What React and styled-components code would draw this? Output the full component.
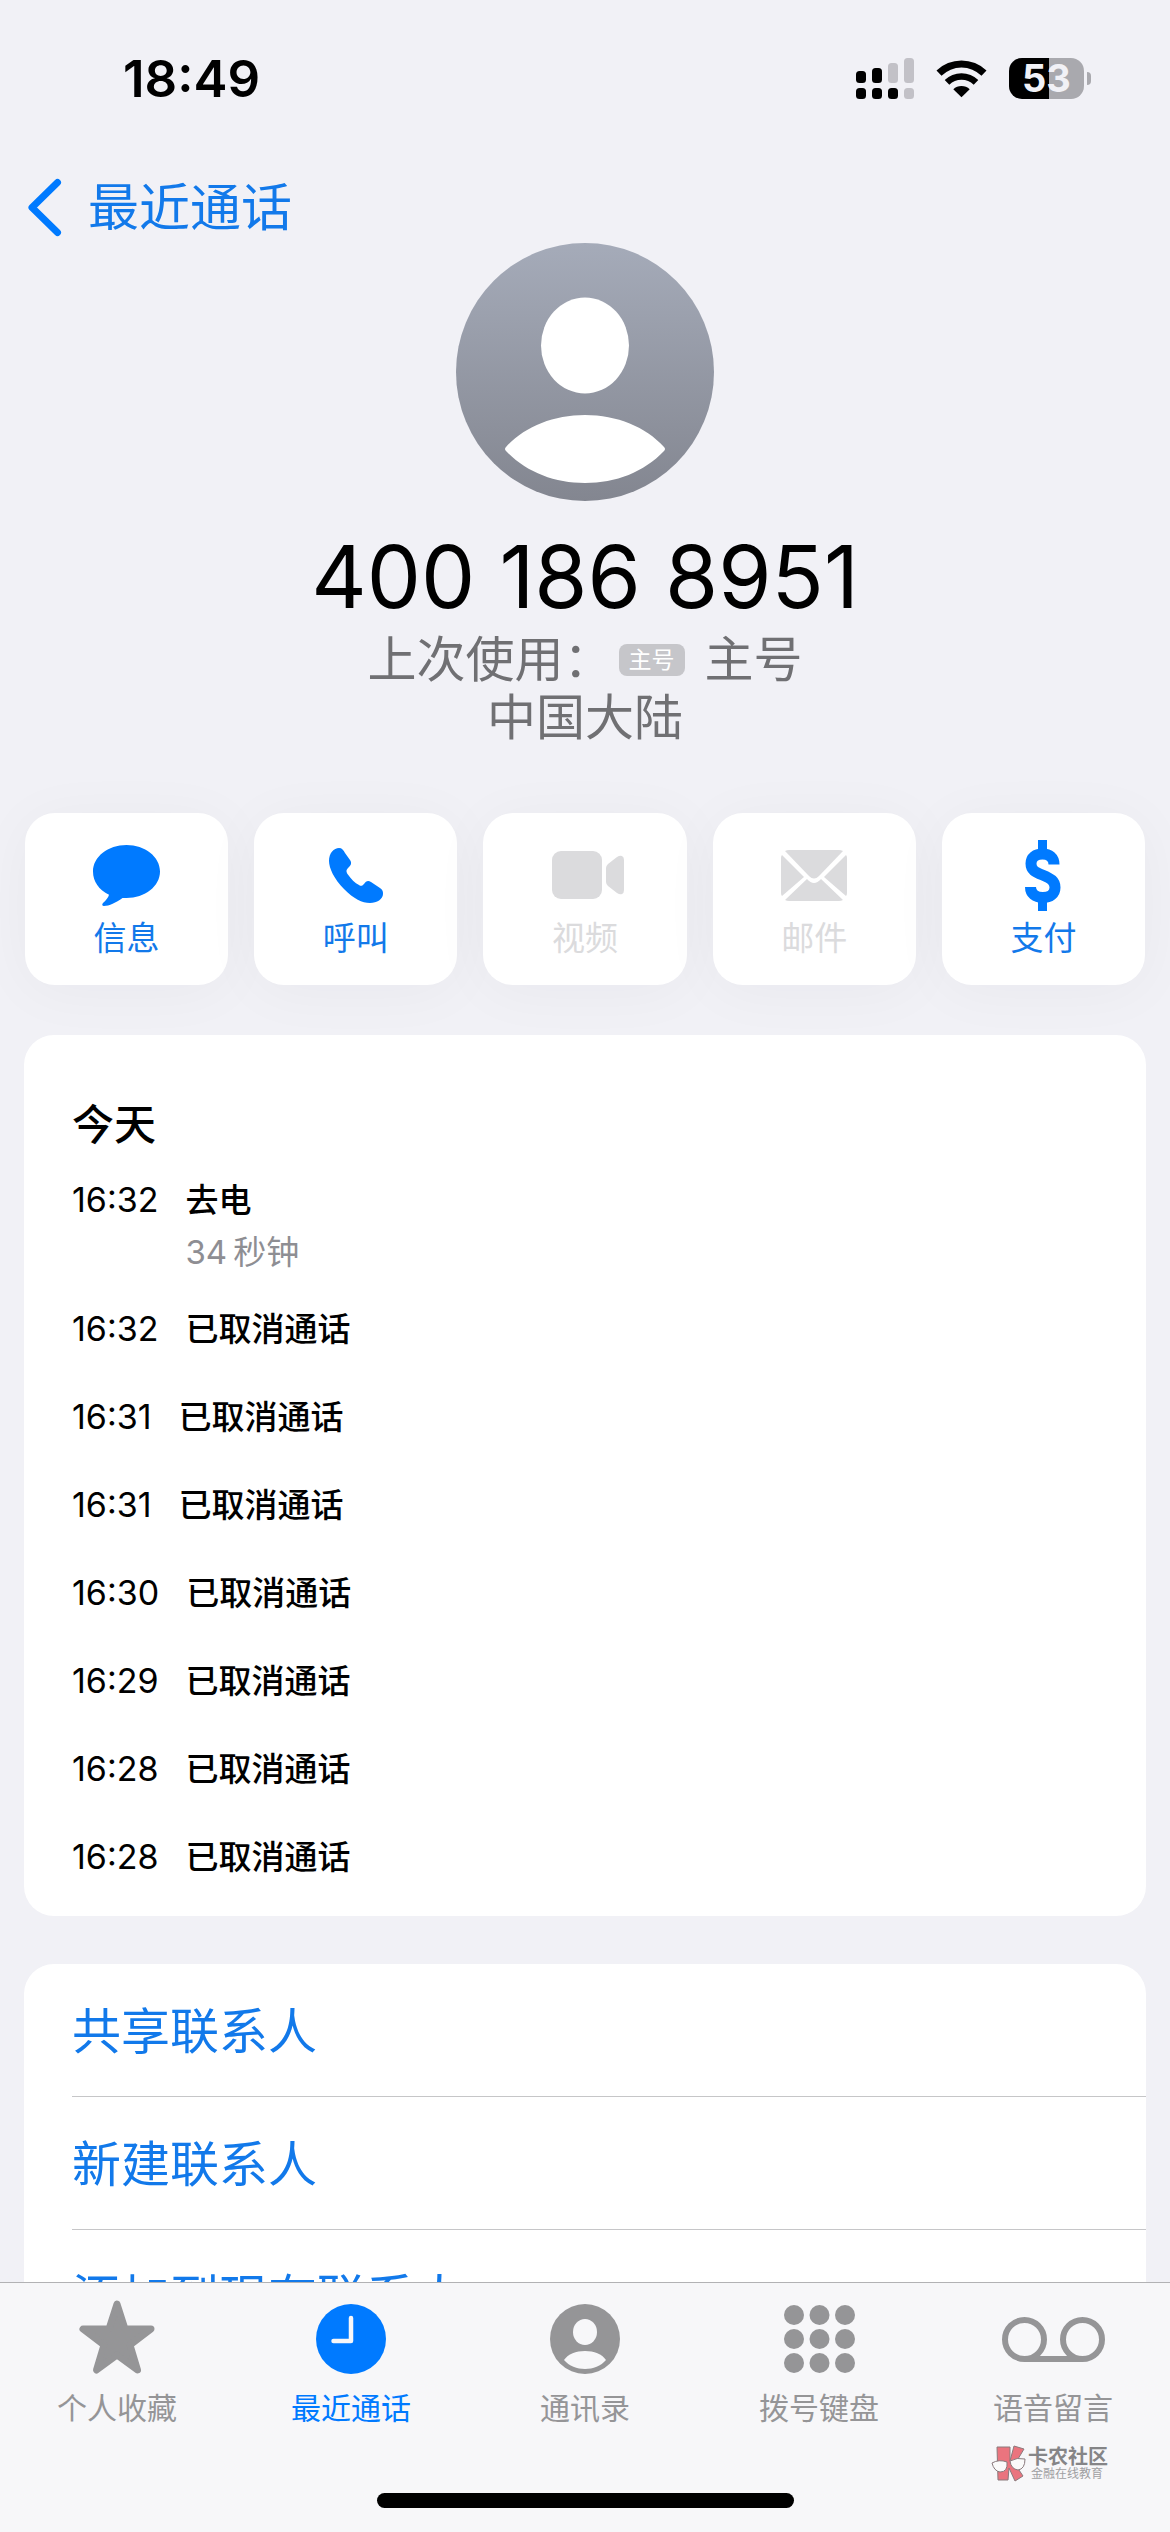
import React from "react";
import styled, { createGlobalStyle } from "styled-components";

const GlobalStyle = createGlobalStyle`
  * {
    box-sizing: border-box;
  }

  body {
    margin: 0;
    background: #f1f1f6;
    color: #000;
    font-family: Inter, "Noto Sans CJK SC", sans-serif;
  }

  button {
    margin: 0;
    padding: 0;
    border: 0;
    background: none;
    color: inherit;
    font: inherit;
  }

  ul {
    margin: 0;
    padding: 0;
    list-style: none;
  }

  svg {
    display: block;
    overflow: visible;
  }
`;

const Screen = styled.div`
  height: 100vh;
  display: flex;
  flex-direction: column;
  overflow: hidden;
`;

const StatusBar = styled.div`
  flex: none;
  height: 156px;
  padding: 0 79px 0 123px;
  display: flex;
  align-items: center;
  justify-content: space-between;
`;

const Clock = styled.div`
  font-size: 51px;
  font-weight: 600;
`;

const StatusIcons = styled.div`
  display: flex;
  align-items: center;
  gap: 22px;
`;

const Battery = styled.div`
  width: 75px;
  height: 41px;
  border-radius: 13px;
  background: linear-gradient(90deg, #000 53%, #a9a9ae 53%);
  color: #f1f1f6;
  font-size: 38px;
  font-weight: 700;
  line-height: 41px;
  text-align: center;
`;

const BatteryGroup = styled.div`
  display: flex;
  align-items: center;
  gap: 3px;
`;

const BatteryCap = styled.div`
  width: 4px;
  height: 13px;
  border-radius: 0 4px 4px 0;
  background: #a9a9ae;
`;

const Nav = styled.nav`
  flex: none;
  height: 87px;
  padding: 16px 28px 0;
  display: flex;
  align-items: center;
`;

const BackLink = styled.a`
  display: flex;
  align-items: center;
  gap: 27px;
  color: #1279ea;
  font-size: 51px;
  line-height: 72px;
  text-decoration: none;
`;

const Main = styled.main`
  flex: 1;
  min-height: 0;
  padding: 0 24px;
  overflow: hidden;
`;

const Header = styled.header`
  display: flex;
  flex-direction: column;
  align-items: center;
`;

const Name = styled.h1`
  margin: 24px 0 2px;
  font-size: 86px;
  font-weight: 400;
  line-height: 104px;
`;

const Subtitle = styled.div`
  display: flex;
  align-items: center;
  color: #707073;
  font-size: 49px;
  line-height: 58px;
`;

const LineBadge = styled.span`
  margin: 0 20px 0 6px;
  padding: 0 10px;
  border-radius: 8px;
  background: #c6c6ca;
  color: #fff;
  font-size: 23px;
  line-height: 32px;
`;

const Actions = styled.div`
  margin: 66px 1px 50px;
  display: grid;
  grid-template-columns: repeat(5, 1fr);
  gap: 26px;
`;

const ActionButton = styled.button`
  height: 172px;
  padding-top: 24px;
  display: flex;
  flex-direction: column;
  align-items: center;
  border-radius: 30px;
  background: #fff;
  box-shadow: 0 6px 60px rgba(20, 20, 60, 0.04);
  color: ${({ disabled }) => (disabled ? "#dbdbdd" : "#007aff")};
`;

const ActionIcon = styled.span`
  height: 76px;
  display: flex;
  align-items: center;
`;

const ActionLabel = styled.span`
  color: ${({ $muted }) => ($muted ? "#dbdbdd" : "#1279ea")};
  font-size: 33px;
  line-height: 50px;
`;

const Card = styled.section`
  margin-bottom: 48px;
  border-radius: 30px;
  background: #fff;
`;

const CallCard = styled(Card)`
  padding: 59px 48px 15px;
`;

const Day = styled.h2`
  margin: 0;
  font-size: 42px;
  font-weight: 500;
  line-height: 62px;
`;

const CallRow = styled.li`
  min-height: 88px;
  padding: 24px 0 13px;
  display: flex;
  gap: 27px;
  font-size: 34px;
  line-height: 40px;
`;

const CallInfo = styled.div`
  display: flex;
  flex-direction: column;
  gap: 12px;
`;

const CallType = styled.span`
  font-size: 33px;
  font-weight: 500;
`;

const CallLength = styled.span`
  color: #8e8e93;
  font-size: 33px;
`;

const LinkRow = styled.li`
  margin-left: 48px;
  border-bottom: 1px solid #c6c6c8;
`;

const LinkButton = styled.button`
  width: 100%;
  padding-top: 4px;
  color: #1279ea;
  font-size: 49px;
  line-height: 128px;
  text-align: left;
`;

const TabBar = styled.nav`
  position: relative;
  flex: none;
  height: 250px;
  padding-bottom: 24px;
  display: flex;
  flex-direction: column;
  justify-content: space-between;
  align-items: center;
  border-top: 1px solid #b2b2b4;
  background: #f7f7f9;
`;

const Tabs = styled.div`
  width: 100%;
  padding-top: 18px;
  display: grid;
  grid-template-columns: repeat(5, 1fr);
`;

const Tab = styled.button`
  display: flex;
  flex-direction: column;
  align-items: center;
  gap: 13px;
  color: ${({ $active }) => ($active ? "#007aff" : "#959597")};
  font-size: 30px;
  line-height: 36px;
`;

const TabIcon = styled.span`
  height: 76px;
  display: flex;
  align-items: center;
`;

const HomeIndicator = styled.div`
  width: 417px;
  height: 15px;
  border-radius: 8px;
  background: #000;
`;

const Watermark = styled.div`
  position: absolute;
  right: 62px;
  bottom: 51px;
  display: flex;
  align-items: center;
  gap: 3px;
`;

const WatermarkTitle = styled.div`
  color: #858587;
  font-size: 20px;
  font-weight: 700;
  line-height: 20px;
`;

const WatermarkText = styled.div`
  padding-left: 3px;
  color: #a0a0a2;
  font-size: 12px;
  line-height: 14px;
`;

const SignalIcon = () => (
  <svg width="58" height="41" viewBox="0 0 58 41" aria-hidden="true">
    <rect x="0" y="13" width="10" height="12" rx="3.5" />
    <rect x="16" y="10" width="10" height="15" rx="3.5" />
    <rect x="32" y="5" width="10" height="20" rx="3.5" fill="#c2c1c7" />
    <rect x="48" y="0" width="10" height="25" rx="3.5" fill="#c2c1c7" />
    <rect x="0" y="30" width="10" height="11" rx="3.5" />
    <rect x="16" y="30" width="10" height="11" rx="3.5" />
    <rect x="32" y="30" width="10" height="11" rx="3.5" />
    <rect x="48" y="30" width="10" height="11" rx="3.5" fill="#c2c1c7" />
  </svg>
);

const WifiIcon = () => (
  <svg width="51" height="37" viewBox="0 0 51 37" aria-hidden="true">
    <path d="M.5 10.5A36 36 0 0 1 50.5 10.5L45.5 15.7A28.5 28.5 0 0 0 5.5 15.7Z" />
    <path d="M8.7 20A24 24 0 0 1 42.3 20L37.7 24.8A17.5 17.5 0 0 0 13.3 24.8Z" />
    <path d="M17.3 29.3A12 12 0 0 1 33.7 29.3L25.5 37.3Z" />
  </svg>
);

const BackIcon = () => (
  <svg width="33" height="57" viewBox="0 0 33 57" fill="none" aria-hidden="true">
    <path d="M29.5 3.5L4 28.5L29.5 53.5" stroke="#007aff" strokeWidth="7" strokeLinecap="round" strokeLinejoin="round" />
  </svg>
);

const Avatar = () => (
  <svg width="258" height="258" viewBox="0 0 258 258" aria-hidden="true">
    <defs>
      <linearGradient id="avatar" x1="0" y1="0" x2="0" y2="1">
        <stop offset="0" stopColor="#a5abb9" />
        <stop offset="1" stopColor="#838690" />
      </linearGradient>
    </defs>
    <circle cx="129" cy="129" r="129" fill="url(#avatar)" />
    <ellipse cx="129" cy="102.5" rx="44" ry="48" fill="#fff" />
    <path d="M50 204C68 184 97 172 129 172C161 172 190 184 208 204Q210 206 208 208C188 229 160 240 129 240C98 240 70 229 50 208Q48 206 50 204Z" fill="#fff" />
  </svg>
);

const MessageIcon = () => (
  <svg width="67" height="61" viewBox="0 0 67 61" fill="currentColor" aria-hidden="true">
    <path d="M33.5 0C52 0 67 11.8 67 26.5C67 41.2 52 53 33.5 53H29.5C23 57.5 16 61 11 61C9 61 8.8 59.5 10 58C13 55 15.5 52.5 16 49.7C6 45 0 36.5 0 26.5C0 11.8 15 0 33.5 0Z" />
  </svg>
);

const PhoneIcon = () => (
  <svg width="54" height="55" viewBox="0 0 54 55" fill="currentColor" aria-hidden="true">
    <path d="M10 0C13 0 14.5 2 16 5L21 12C23 15 22 17 20 19C17 22 17 23 18.5 26C22 31 26 35 30 37C32 38.5 33 38 35 36C37 33 39 32 42 34L51 40C54 42 54 44 54 46C54 51 48 55 41 55C33 55 25 51 15 41C5 31 0 20 0 13C0 5 5 0 10 0Z" />
  </svg>
);

const VideoIcon = () => (
  <svg width="66" height="48" viewBox="0 0 66 48" fill="currentColor" aria-hidden="true">
    <rect width="50" height="48" rx="9" />
    <path d="M54 17Q54 15 56 13L65 6Q68 4 70 5Q72 6 72 9V39Q72 42 70 43Q68 44 65 42L56 35Q54 33 54 31Z" />
  </svg>
);

const MailIcon = () => (
  <svg width="66" height="51" viewBox="0 0 66 51" fill="currentColor" aria-hidden="true">
    <path d="M4 1Q6 0 8 0H58Q60 0 62 1L38 26Q33 31 28 26Z" />
    <path d="M0 8Q0 6 1 5L23 27L1 46Q0 45 0 43Z" />
    <path d="M66 8Q66 6 65 5L43 27L65 46Q66 45 66 43Z" />
    <path d="M4 50L26 29Q33 37 40 29L62 50Q60 51 58 51H8Q6 51 4 50Z" />
  </svg>
);

const PayIcon = () => (
  <svg width="36" height="71" viewBox="0 0 36 71" fill="none" stroke="currentColor" aria-hidden="true">
    <path d="M17.5 0V14M17.5 57V71" strokeWidth="9" />
    <path
      d="M29 24.5C29 17.5 24.5 14 17.5 14C10.5 14 6 17.5 6 23.5C6 30 10 32 17.5 35C26 38.5 30 41 30 47.5C30 54 25 57.5 17.8 57.5C10 57.5 5.5 53.5 5.5 47"
      strokeWidth="11"
    />
  </svg>
);

const StarIcon = () => (
  <svg width="76" height="76" viewBox="0 0 76 76" fill="currentColor" stroke="currentColor" strokeWidth="7" strokeLinejoin="round" aria-hidden="true">
    <path d="M38 3L46 28H72L51 44L58.5 69L38 54L17.500 69L25 44L4 28H30Z" />
  </svg>
);

const RecentsIcon = () => (
  <svg width="70" height="70" viewBox="0 0 70 70" fill="none" aria-hidden="true">
    <circle cx="35" cy="35" r="35" fill="currentColor" />
    <path d="M35 14V37H17.5" stroke="#f7f7f9" strokeWidth="4.5" strokeLinecap="round" strokeLinejoin="round" />
  </svg>
);

const ContactsIcon = () => (
  <svg width="70" height="70" viewBox="0 0 70 70" aria-hidden="true">
    <circle cx="35" cy="35" r="35" fill="currentColor" />
    <ellipse cx="35" cy="28" rx="12" ry="13" fill="#f7f7f9" />
    <path d="M14 56C18 50 26 47 35 47C44 47 52 50 56 56C51 62 43 65 35 65C27 65 19 62 14 56Z" fill="#f7f7f9" />
  </svg>
);

const KeypadIcon = () => (
  <svg width="71" height="68" viewBox="0 0 71 68" fill="currentColor" aria-hidden="true">
    {[10, 34, 58].map((cy) => [10, 35.5, 61].map((cx) => <circle key={`${cx}-${cy}`} cx={cx} cy={cy} r="10" />))}
  </svg>
);

const VoicemailIcon = () => (
  <svg width="103" height="45" viewBox="0 0 103 45" fill="none" stroke="currentColor" strokeWidth="6" aria-hidden="true">
    <circle cx="22.5" cy="22.5" r="19.5" />
    <circle cx="80.5" cy="22.5" r="19.5" />
    <path d="M22.5 42H80.5" />
  </svg>
);

const WatermarkLogo = () => (
  <svg width="33" height="35" viewBox="0 0 33 35" stroke="#8a7a7d" strokeWidth="1" strokeLinejoin="round" aria-hidden="true">
    <path d="M5 1H18V15L22 0L32 3L23 18L31 30L23 35L17 22L16 34H6Z" fill="#ea747e" />
    <path d="M0 17Q7 13 15 16Q16 26 8 26Q2 25 0 17Z" fill="#fafafa" />
    <path d="M18 15Q25 11 33 13Q33 23 26 24Q19 23 18 15Z" fill="#fafafa" />
  </svg>
);

const actions = [
  { label: "信息", icon: <MessageIcon /> },
  { label: "呼叫", icon: <PhoneIcon /> },
  { label: "视频", icon: <VideoIcon />, disabled: true },
  { label: "邮件", icon: <MailIcon />, disabled: true },
  { label: "支付", icon: <PayIcon /> },
];

const calls = [
  { time: "16:32", type: "去电", length: "34\u2009秒钟" },
  { time: "16:32", type: "已取消通话" },
  { time: "16:31", type: "已取消通话" },
  { time: "16:31", type: "已取消通话" },
  { time: "16:30", type: "已取消通话" },
  { time: "16:29", type: "已取消通话" },
  { time: "16:28", type: "已取消通话" },
  { time: "16:28", type: "已取消通话" },
];

const links = ["共享联系人", "新建联系人", "添加到现有联系人"];

const tabs = [
  { label: "个人收藏", icon: <StarIcon /> },
  { label: "最近通话", icon: <RecentsIcon />, active: true },
  { label: "通讯录", icon: <ContactsIcon /> },
  { label: "拨号键盘", icon: <KeypadIcon /> },
  { label: "语音留言", icon: <VoicemailIcon /> },
];

const App = () => {
  return (
    <Screen lang="zh-CN">
      <GlobalStyle />

      <StatusBar>
        <Clock>18:49</Clock>
        <StatusIcons>
          <SignalIcon />
          <WifiIcon />
          <BatteryGroup>
            <Battery>53</Battery>
            <BatteryCap />
          </BatteryGroup>
        </StatusIcons>
      </StatusBar>

      <Nav>
        <BackLink href="#recents">
          <BackIcon />
          最近通话
        </BackLink>
      </Nav>

      <Main>
        <Header>
          <Avatar />
          <Name>400 186 8951</Name>
          <Subtitle>
            上次使用：
            <LineBadge>主号</LineBadge>
            主号
          </Subtitle>
          <Subtitle>中国大陆</Subtitle>
        </Header>

        <Actions>
          {actions.map((action) => (
            <ActionButton key={action.label} type="button" disabled={action.disabled}>
              <ActionIcon>{action.icon}</ActionIcon>
              <ActionLabel $muted={action.disabled}>{action.label}</ActionLabel>
            </ActionButton>
          ))}
        </Actions>

        {/* Call history */}
        <CallCard>
          <Day>今天</Day>
          <ul>
            {calls.map((call, index) => (
              <CallRow key={index}>
                <time>{call.time}</time>
                <CallInfo>
                  <CallType>{call.type}</CallType>
                  {call.length && <CallLength>{call.length}</CallLength>}
                </CallInfo>
              </CallRow>
            ))}
          </ul>
        </CallCard>

        <Card>
          <ul>
            {links.map((link) => (
              <LinkRow key={link}>
                <LinkButton type="button">{link}</LinkButton>
              </LinkRow>
            ))}
          </ul>
        </Card>
      </Main>

      <TabBar>
        <Tabs>
          {tabs.map((tab) => (
            <Tab key={tab.label} type="button" $active={tab.active}>
              <TabIcon>{tab.icon}</TabIcon>
              {tab.label}
            </Tab>
          ))}
        </Tabs>
        <Watermark>
          <WatermarkLogo />
          <div>
            <WatermarkTitle>卡农社区</WatermarkTitle>
            <WatermarkText>金融在线教育</WatermarkText>
          </div>
        </Watermark>
        <HomeIndicator />
      </TabBar>
    </Screen>
  );
};

export default App;
